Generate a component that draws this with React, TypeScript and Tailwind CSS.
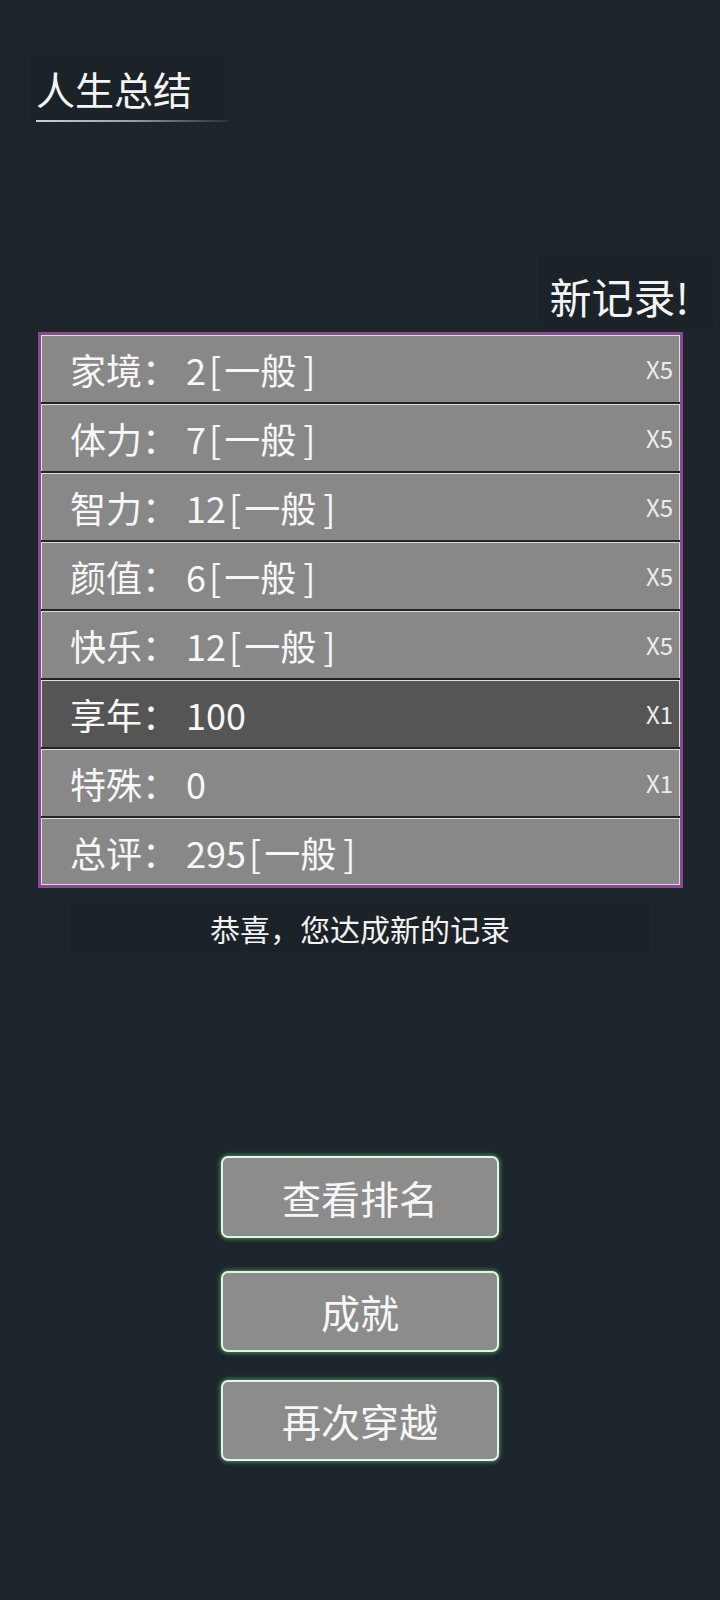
const rows = [
  { label: '家境', num: '2', grade: '一般', mult: 'X5' },
  { label: '体力', num: '7', grade: '一般', mult: 'X5' },
  { label: '智力', num: '12', grade: '一般', mult: 'X5' },
  { label: '颜值', num: '6', grade: '一般', mult: 'X5' },
  { label: '快乐', num: '12', grade: '一般', mult: 'X5' },
  { label: '享年', num: '100', grade: '', mult: 'X1', dark: true },
  { label: '特殊', num: '0', grade: '', mult: 'X1' },
  { label: '总评', num: '295', grade: '一般', mult: '' },
];

const buttons = [
  { text: '查看排名', gap: 'mt-[202px] h-[82px]' },
  { text: '成就', gap: 'mt-[33px] h-[81px]' },
  { text: '再次穿越', gap: 'mt-[28px] h-[81px]' },
];

export default function App() {
  return (
    <div
      className="w-[720px] h-[1600px] bg-[#1d252c] text-white flex flex-col"
      style={{ fontFamily: '"Noto Sans CJK SC", "Noto Sans", sans-serif' }}
    >
      {/* Title */}
      <div className="mt-[53px] ml-[31px] w-[195px] bg-[#1b2329] pt-[16px] pl-[5px]">
        <div className="text-[39px] leading-none text-[#f4f4f4]">人生总结</div>
        <div className="mt-[12px] h-[2px] w-[192px] bg-gradient-to-r from-[#cfcfcf] via-[#9aa0a5] to-[#2a3239]" />
      </div>

      {/* New record */}
      <div className="mt-[134px] ml-auto mr-[6px] w-[175px] h-[71px] bg-[#1b2329] pt-[19px] pr-[25px] text-right">
        <span className="text-[42px] leading-none text-[#f4f4f4]">新记录!</span>
      </div>

      {/* Stats panel */}
      <div className="mt-[5px] ml-[38px] w-[645px] border-[3px] border-[#8a4a8e]">
        <div className="flex flex-col gap-[2px] bg-[#1d252c]">
          {rows.map((r, i) => (
            <div
              key={r.label}
              className={`h-[67px] flex items-center justify-between border-t border-x border-[#dcdcdc] pl-[28px] pr-[6px] ${
                r.dark ? 'bg-[#555555]' : 'bg-[#888888]'
              } ${i === rows.length - 1 ? 'border-b' : ''}`}
            >
              <span className="text-[36px] leading-none text-[#f7f7f7] flex items-baseline">
                <span>{r.label}：</span>
                <span className="ml-[8px]">{r.num}</span>
                {r.grade && (
                  <>
                    <span className="ml-[3px] mr-[3px]">[</span>
                    <span>{r.grade}</span>
                    <span className="ml-[7px]">]</span>
                  </>
                )}
              </span>
              <span className="text-[24px] leading-none text-[#ececec]">{r.mult}</span>
            </div>
          ))}
        </div>
      </div>

      {/* Message */}
      <div className="mt-[13px] mx-[71px] h-[53px] bg-[#1b2329] flex items-center justify-center">
        <span className="text-[30px] leading-none text-[#f2f2f2]">恭喜，您达成新的记录</span>
      </div>

      {/* Buttons */}
      {buttons.map((b) => (
        <div
          key={b.text}
          className={`${b.gap} ml-[221px] w-[278px] rounded-[7px] border-2 border-[#e2f4e2] bg-[#8c8c8c] shadow-[0_0_4px_1px_#4e8a5c] flex items-center justify-center`}
        >
          <span className="text-[39px] leading-none text-[#f7f7f7]">{b.text}</span>
        </div>
      ))}
    </div>
  );
}
